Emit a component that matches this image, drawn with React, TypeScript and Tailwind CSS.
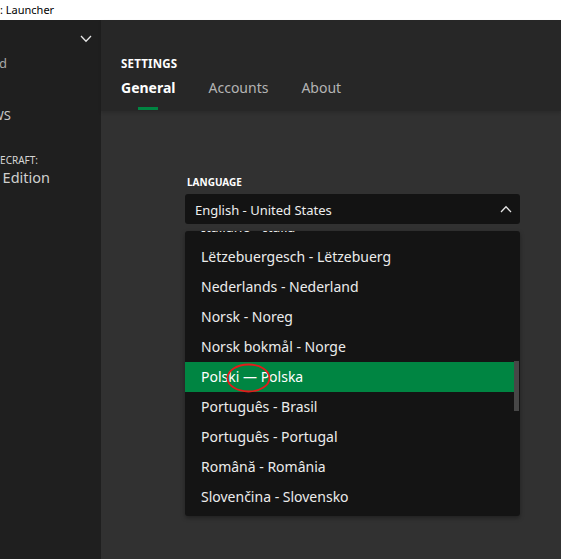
const languages = [
  "Italiano - Italia",
  "Lëtzebuergesch - Lëtzebuerg",
  "Nederlands - Nederland",
  "Norsk - Noreg",
  "Norsk bokmål - Norge",
  "Polski — Polska",
  "Português - Brasil",
  "Português - Portugal",
  "Română - România",
  "Slovenčina - Slovensko",
  "Suomi - Suomi",
];

function Chevron({ up = false }: { up?: boolean }) {
  return (
    <svg width="12" height="8" viewBox="0 0 12 8" fill="none">
      <path
        d={up ? "M1 7 L6 1.8 L11 7" : "M1 1 L6 6.2 L11 1"}
        stroke="#e6e6e6"
        strokeWidth="1.3"
      />
    </svg>
  );
}

function Clip({ width, children, className }: { width: number; children: string; className: string }) {
  return (
    <div className="flex justify-end overflow-hidden" style={{ width }}>
      <span className={"whitespace-nowrap " + className}>{children}</span>
    </div>
  );
}

export default function App() {
  return (
    <div className="w-[561px] h-[559px] flex flex-col overflow-hidden font-['Noto_Sans','Open_Sans',sans-serif]">
      {/* window title */}
      <div className="h-[20px] bg-white text-[11px] leading-[20px] text-black">
        : Launcher
      </div>

      <div className="flex flex-1 min-h-0">
        {/* sidebar, scrolled off to the left */}
        <aside className="w-[101px] bg-[#1f1f1f] flex flex-col">
          <div className="flex justify-end pr-[9px] pt-[15px]">
            <Chevron />
          </div>
          <div className="mt-[12px]">
            <Clip width={7} className="text-[13px] leading-[16px] text-[#a8a8a8]">Signed</Clip>
          </div>
          <div className="mt-[36px]">
            <Clip width={11} className="text-[13px] leading-[16px] text-[#c8c8c8]">NEWS</Clip>
          </div>
          <div className="mt-[31px]">
            <Clip width={38} className="text-[10px] leading-[12px] text-[#d6d6d6]">MINECRAFT:</Clip>
          </div>
          <div className="mt-[1px]">
            <Clip width={50} className="text-[14.5px] leading-[20px] text-[#cfcfcf]">Java Edition</Clip>
          </div>
        </aside>

        <main className="flex-1 flex flex-col bg-[#313131]">
          {/* header */}
          <header className="h-[91px] bg-[#272727] pl-[20px] pt-[37px] shadow-[0_2px_3px_rgba(0,0,0,0.15)]">
            <div className="text-[11.5px] leading-[14px] font-bold text-white tracking-[0.2px]">SETTINGS</div>
            <div className="flex gap-[33px] mt-[7px]">
              <div className="flex flex-col items-center">
                <span className="text-[14px] leading-[20px] font-bold text-white">General</span>
                <span className="mt-[9px] w-[20px] h-[3px] bg-[#008542]" />
              </div>
              <span className="text-[14px] leading-[20px] text-[#b4b4b4]">Accounts</span>
              <span className="text-[14px] leading-[20px] text-[#b4b4b4]">About</span>
            </div>
          </header>

          {/* content */}
          <section className="pl-[84px] pt-[64px]">
            <div className="pl-[2px] text-[10px] leading-[14px] font-bold text-white">LANGUAGE</div>
            <div className="mt-[5px] w-[335px] h-[30px] bg-[#131313] rounded-[3px] flex items-center justify-between pl-[10px] pr-[8px]">
              <span className="text-[13px] leading-[18px] pt-[1px] text-[#eeeeee]">English - United States</span>
              <Chevron up />
            </div>

            <div className="mt-[7px] w-[335px] h-[285px] bg-[#141414] rounded-[3px] overflow-hidden flex shadow-[0_2px_4px_rgba(0,0,0,0.35)]">
              <div className="flex-1 -mt-[19px]">
                {languages.map((l) => {
                  const active = l.startsWith("Polski");
                  return (
                    <div
                      key={l}
                      className={
                        "relative h-[30px] flex items-center pl-[16px] pb-[2px] text-[14px] " +
                        (active ? "bg-[#008542] text-white" : "text-[#ececec]")
                      }
                    >
                      {l}
                      {active && (
                        <svg className="absolute left-[41px] top-[1px]" width="45" height="30" viewBox="0 0 45 30" fill="none">
                          <ellipse cx="22.5" cy="15" rx="21" ry="13.5" stroke="#e31b1b" strokeWidth="1.8" />
                        </svg>
                      )}
                    </div>
                  );
                })}
              </div>
              <div className="w-[6px] pr-[1px]">
                <div className="mt-[130px] h-[50px] w-[5px] bg-[#474747]" />
              </div>
            </div>
          </section>
        </main>
      </div>
    </div>
  );
}
